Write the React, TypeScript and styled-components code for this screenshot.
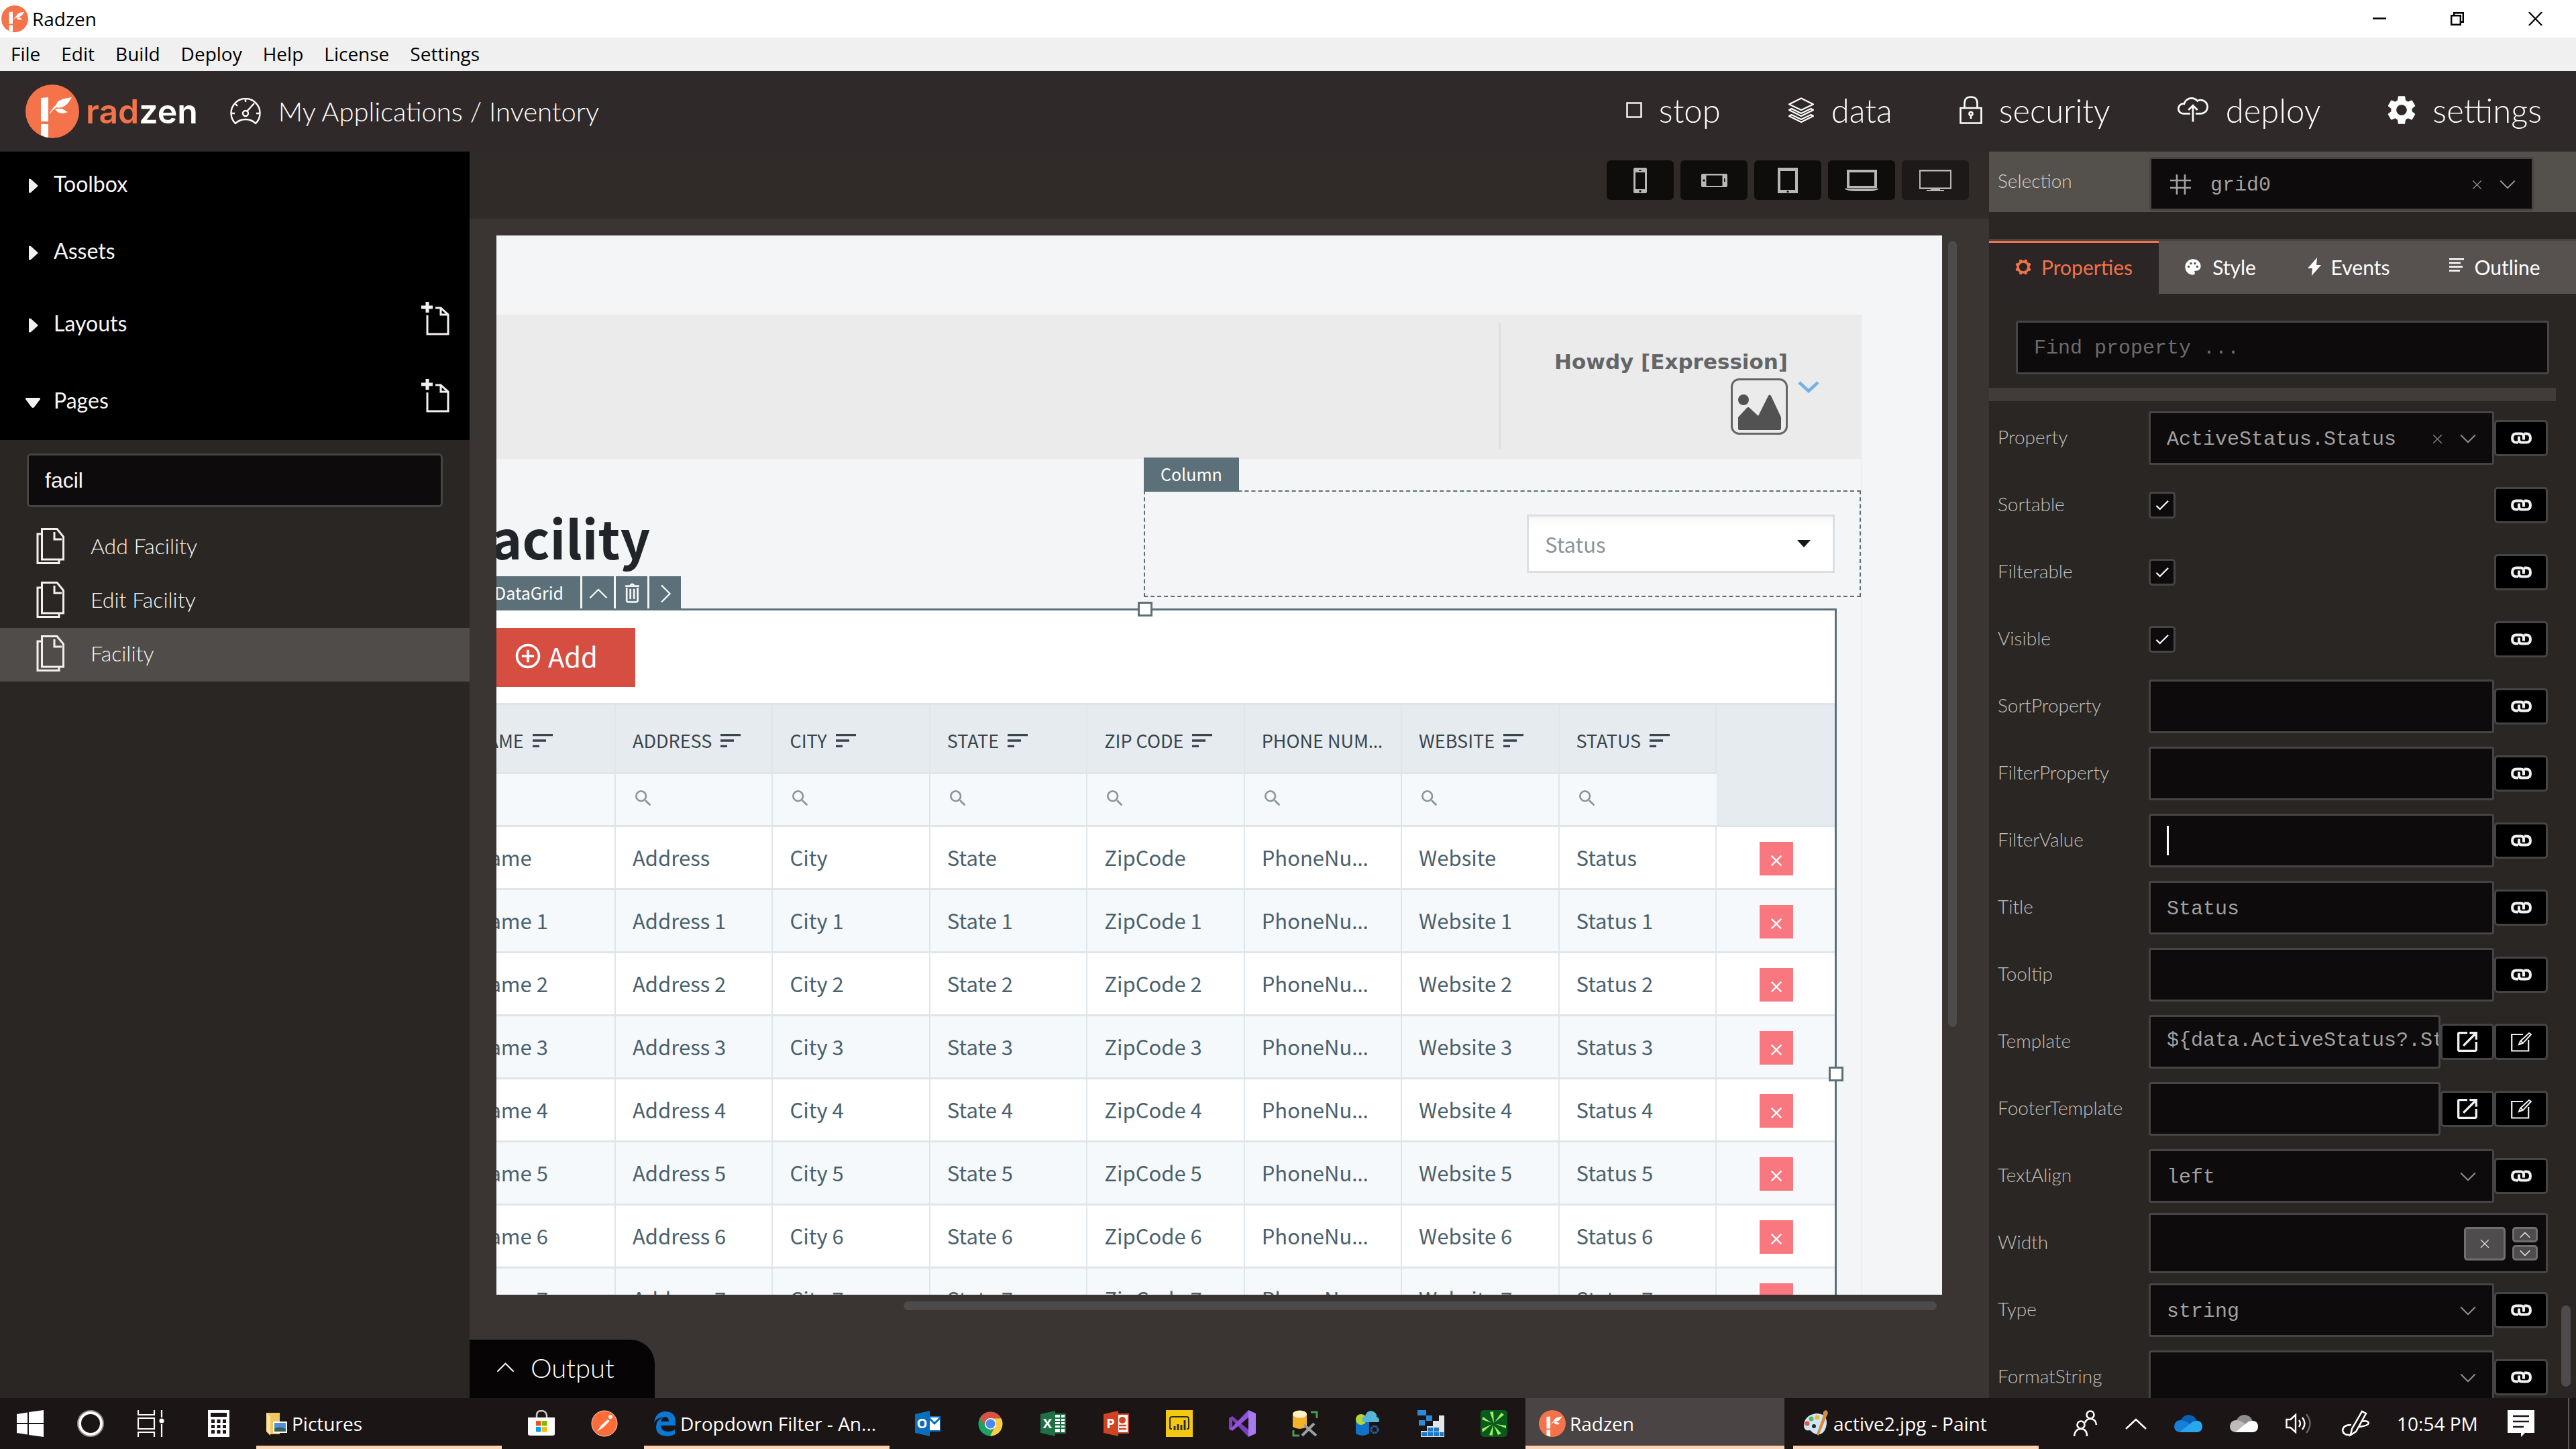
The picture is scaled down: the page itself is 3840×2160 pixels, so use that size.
import React from 'react';
import styled, { createGlobalStyle, css } from 'styled-components';
import { TfiCloudUp, TfiTrash, TfiAngleUp, TfiAngleRight, TfiAngleDown, TfiClose } from 'react-icons/tfi';
import {
  MdSettings, MdOpenInNew, MdSort, MdSearch, MdAddCircleOutline, MdPalette, MdCheck, MdClose,
} from 'react-icons/md';

const color = {
  orange: '#f4734a',
  header: '#2f2929',
  panel: '#2a2623',
  stage: '#3a3532',
  field: '#0d0b0c',
  line: '#464445',
  slate: '#5c7079',
  gridLine: '#dfe6ea',
};

const font = {
  ui: '"Open Sans", "Noto Sans", sans-serif',
  lato: 'Lato, "Open Sans", sans-serif',
  source: '"Noto Sans CJK SC", "Noto Sans", sans-serif',
  mono: '"Liberation Mono", "DejaVu Sans Mono", monospace',
};

const GlobalStyle = createGlobalStyle`
  *, *::before, *::after { box-sizing: border-box; }
  body { margin: 0; background: ${color.stage}; font-family: ${font.lato}; }
  button, input, select { font: inherit; color: inherit; margin: 0; border-radius: 0; }
  button { background: none; border: 0; padding: 0; }
  a { color: inherit; text-decoration: none; }
  h1, ul { margin: 0; padding: 0; }
  ul { list-style: none; }
  svg { display: block; flex: none; }
`;

const AppWindow = styled.div`
  display: flex;
  flex-direction: column;
  height: 100vh;
  overflow: hidden;
`;

/* ---------- window chrome ---------- */

const TitleBar = styled.div`
  display: flex;
  align-items: center;
  gap: 6px;
  height: 56px;
  padding: 0 50px 0 2px;
  background: #fff;
  color: #000;
  font: 28px/40px ${font.ui};
`;

const WindowControls = styled.div`
  display: flex;
  gap: 96px;
  margin-left: auto;
`;

const MenuBar = styled.nav`
  display: flex;
  align-items: center;
  gap: 31px;
  height: 50px;
  padding: 0 16px 2px;
  background: #f0f0f0;
  color: #000;
  font: 28px/40px ${font.ui};
`;

const Header = styled.header`
  display: flex;
  align-items: center;
  height: 120px;
  padding: 0 51px 0 38px;
  background: ${color.header};
  color: #fff;
`;

const Brand = styled.a`
  display: flex;
  align-items: center;
  gap: 10px;
  font: 600 50px/60px Inter, sans-serif;
  color: #fff;
  b { color: ${color.orange}; font-weight: 600; }
`;

const Crumbs = styled.div`
  display: flex;
  align-items: center;
  gap: 26px;
  margin-left: 48px;
  font: 300 40px/60px ${font.lato};
`;

const HeaderNav = styled.nav`
  display: flex;
  gap: 100px;
  margin-left: auto;
  padding-bottom: 4px;
  font: 300 49px/60px ${font.lato};
`;

const NavButton = styled.button`
  display: flex;
  align-items: center;
  gap: 25px;
`;

const IconBox = styled.span<{ $w: number }>`
  display: flex;
  justify-content: center;
  width: ${p => p.$w}px;
`;

/* ---------- workspace ---------- */

const Workspace = styled.div`
  display: flex;
  flex: 1;
  min-height: 0;
`;

const Sidebar = styled.aside`
  flex: none;
  width: 700px;
  background: ${color.panel};
  color: #f8f6f4;
`;

const SectionList = styled.div`
  background: #000;
`;

const Section = styled.div<{ $tall?: boolean }>`
  display: flex;
  align-items: center;
  justify-content: space-between;
  height: ${p => (p.$tall ? 115 : 100)}px;
  padding: 0 30px 4px 38px;
`;

const SectionToggle = styled.button`
  display: flex;
  align-items: center;
  gap: 20px;
  font: 32px/40px ${font.lato};
  svg { margin-top: 6px; }
`;

const AddPageButton = styled.button`
  margin-bottom: 14px;
`;

const PageFilter = styled.input`
  display: block;
  width: 620px;
  height: 80px;
  margin: 20px 40px;
  padding: 0 24px;
  background: ${color.field};
  border: 3px solid ${color.line};
  border-radius: 6px;
  outline: 0;
  font: 32px/40px "Liberation Sans", Arial, sans-serif;
`;

const PageLink = styled.a<{ $active?: boolean }>`
  display: flex;
  align-items: center;
  gap: 38px;
  height: 80px;
  padding: 0 0 4px 54px;
  background: ${p => (p.$active ? '#504c49' : 'transparent')};
  font: 300 32px/40px ${font.lato};
`;

const Stage = styled.main`
  display: flex;
  flex-direction: column;
  flex: 1;
  min-width: 0;
  background: ${color.stage};
`;

const DeviceBar = styled.div`
  display: flex;
  justify-content: flex-end;
  gap: 10px;
  height: 100px;
  padding: 13px 30px 0 0;
  background: #302a28;
`;

const DeviceButton = styled.button<{ $active?: boolean }>`
  display: flex;
  align-items: center;
  justify-content: center;
  width: 100px;
  height: 59px;
  border-radius: 6px;
  background: ${p => (p.$active ? '#1d1918' : '#0f0d0b')};
  color: #b9b7b4;
`;

const Viewport = styled.div`
  display: grid;
  grid-template: minmax(0, 1fr) 13px / minmax(0, 1fr) 13px;
  gap: 10px 9px;
  flex: 1;
  min-height: 0;
  padding: 25px 48px 44px 40px;
`;

const VTrack = styled.div`
  padding: 8px 0;
  &::before { content: ''; display: block; height: 75%; border-radius: 7px; background: #4c4a4a; }
`;

const HTrack = styled.div`
  display: flex;
  justify-content: flex-end;
  padding: 0 8px;
  &::before { content: ''; width: 72%; border-radius: 7px; background: #4c4a4a; }
`;

const OutputTab = styled.button`
  display: flex;
  align-items: center;
  align-self: flex-start;
  gap: 24px;
  height: 87px;
  padding: 0 60px 4px 40px;
  background: #060405;
  color: #fff;
  border-top-right-radius: 36px;
  font: 300 40px/60px ${font.lato};
  svg { stroke: currentColor; stroke-width: 0.4; }
`;

/* ---------- designed page ---------- */

const Canvas = styled.section`
  overflow: hidden;
  background: #f3f5f7;
  font-family: ${font.source};
`;

const DesignPage = styled.div`
  margin: 118px 119px 0 -64px;
  border-right: 2px solid #eceef0;
`;

const PageHeader = styled.div`
  display: flex;
  justify-content: flex-end;
  height: 215px;
  padding: 12px 0 14px;
  background: #ebebeb;
`;

const UserBox = styled.div`
  display: flex;
  justify-content: flex-end;
  gap: 15px;
  width: 540px;
  padding: 36px 62px 0 0;
  border-left: 3px solid #dfdfdf;
`;

const UserInfo = styled.div`
  display: flex;
  flex-direction: column;
  align-items: flex-end;
  gap: 5px;
  padding-top: 2px;
  color: #636567;
  font: bold 31px/40px "DejaVu Sans", "Noto Sans", sans-serif;
`;

const UserToggle = styled.button`
  display: flex;
  align-self: flex-start;
  margin-top: 51px;
`;

const TitleRow = styled.div`
  display: grid;
  grid-template-columns: 1029px 1fr;
  height: 223px;
  padding: 47px 0 17px;
`;

const PageTitle = styled.h1`
  padding: 11px 0 0 14px;
  color: #212429;
  font: bold 78px/116px ${font.source};
`;

const ColumnBox = styled.div`
  position: relative;
  display: flex;
  justify-content: flex-end;
  align-items: center;
  padding-right: 37px;
  border: 2px dashed ${color.slate};
`;

const TagBar = styled.div`
  position: absolute;
  bottom: 100%;
  left: -2px;
  display: flex;
  gap: 3px;
`;

const Tag = styled.span<{ $inset?: boolean }>`
  height: 51px;
  padding: 0 25px 0 ${p => (p.$inset ? 63 : 25)}px;
  background: ${color.slate};
  color: #fff;
  font: 25px/48px ${font.source};
`;

const TagButton = styled.button`
  display: flex;
  align-items: center;
  justify-content: center;
  width: 47px;
  height: 51px;
  background: ${color.slate};
  color: #fff;
  svg { stroke: currentColor; stroke-width: 0.4; }
`;

const StatusPicker = styled.div`
  display: grid;
  align-items: center;
  width: 459px;
  height: 87px;
  background: linear-gradient(#f6f6f6, #fff 14px);
  border: 3px solid #dadfe2;
  > * { grid-area: 1 / 1; }
  > svg { justify-self: end; margin-right: 33px; }
  select {
    appearance: none;
    height: 100%;
    padding: 0 24px;
    background: none;
    border: 0;
    color: #8a9499;
    font: 31px/40px ${font.source};
  }
`;

const GridFrame = styled.div`
  position: relative;
  width: 2062px;
  background: #fff;
  border: solid ${color.slate};
  border-width: 3px 3px 0 0;
`;

const Handle = styled.span<{ $side: 'top' | 'right' }>`
  position: absolute;
  width: 22px;
  height: 22px;
  background: #fff;
  border: 3px solid ${color.slate};
  ${p => (p.$side === 'top'
    ? css`top: -13px; left: calc(50% - 10px);`
    : css`top: 680px; right: -13px;`)}
`;

const GridToolbar = styled.div`
  padding: 26px 36px 24px;
`;

const AddButton = styled.button`
  display: flex;
  align-items: center;
  gap: 8px;
  height: 88px;
  padding: 0 56px 4px 53px;
  background: #d64d41;
  color: #fff;
  font: 40px/60px ${font.source};
`;

const Table = styled.table`
  width: 100%;
  table-layout: fixed;
  border-collapse: separate;
  border-spacing: 0;
  color: #4a616d;
  font: 31px/40px ${font.source};
  th, td {
    padding: 0 23px 0 25px;
    text-align: left;
    border-right: 2px solid ${color.gridLine};
    border-bottom: 3px solid ${color.gridLine};
  }
  th:first-child, td:first-child { padding-left: 31px; }
  th:last-child, td:last-child { border-right: 0; }
  tbody tr { height: 94px; }
  tbody tr:nth-child(even) { background: #f6f9fb; }
`;

const TitleCells = styled.tr`
  height: 106px;
  background: #e6ebef;
  color: #38454b;
  th { font-weight: 400; font-size: 27px; border-top: 3px solid ${color.gridLine}; padding-top: 6px; }
`;

const FilterCells = styled.tr`
  height: 79px;
  background: #f6f9fb;
  color: #86969a;
  td { padding-bottom: 4px; }
`;

const Col = styled.col<{ $w: number }>`
  width: ${p => p.$w}px;
`;

const Clip = styled.div`
  display: block;
  overflow: hidden;
  white-space: nowrap;
  text-overflow: ellipsis;
  font-family: "Noto Sans", sans-serif;
  svg { display: inline-block; vertical-align: -9px; margin-left: 8px; }
`;

const ClipText = styled.span`
  font-family: ${font.source};
`;

const RemoveButton = styled.button`
  display: flex;
  align-items: center;
  justify-content: center;
  width: 50px;
  height: 50px;
  margin: 2px auto 0;
  padding-top: 6px;
  background: #f9777f;
  color: #fff;
`;

/* ---------- inspector ---------- */

const Inspector = styled.aside`
  display: flex;
  flex-direction: column;
  flex: none;
  width: 875px;
  background: ${color.panel};
  color: #c4c0bd;
`;

const SelectionBar = styled.div`
  display: grid;
  grid-template-columns: 226px 573px;
  align-items: center;
  flex: none;
  height: 90px;
  padding-left: 13px;
  background: #54504c;
  font: 300 28px/40px ${font.lato};
  > label { padding-bottom: 4px; color: #d6d3d0; }
  > div { margin-top: 6px; }
`;

const TabList = styled.div`
  display: flex;
  flex: none;
  margin-top: 40px;
  border-top: 3px solid ${color.line};
  height: 82px;
  background: #575250;
  color: #fff;
`;

const Tab = styled.button<{ $active?: boolean; $w: number }>`
  display: flex;
  align-items: center;
  justify-content: center;
  gap: 15px;
  width: ${p => p.$w}px;
  padding-bottom: 2px;
  font: 30px/40px ${font.lato};
  ${p => p.$active && css`
    background: #2b2525;
    color: ${color.orange};
    box-shadow: inset 0 3px ${color.orange};
  `}
`;

const fieldBox = css`
  background: ${color.field};
  border: 3px solid ${color.line};
  border-radius: 4px;
  font: 30px/40px ${font.mono};
  color: #a3a1a0;
`;

const PropertySearch = styled.input`
  ${fieldBox}
  flex: none;
  height: 80px;
  margin: 40px 40px 20px;
  padding: 2px 24px 0;
  outline: 0;
  &::placeholder { color: #6e6c6b; opacity: 1; }
`;

const Divider = styled.div`
  flex: none;
  height: 20px;
  margin-right: 30px;
  background: #413c39;
`;

const PropertyArea = styled.div`
  display: flex;
  flex: 1;
  min-height: 0;
  overflow: hidden;
`;

const PropertyList = styled.div`
  flex: 1;
  padding: 5px 20px 0 13px;
`;

const PropertyTrack = styled.div`
  display: flex;
  flex-direction: column;
  justify-content: flex-end;
  width: 22px;
  padding: 0 8px 17px 0;
  &::before { content: ''; height: 121px; border-radius: 7px; background: #4d4b4c; }
`;

const PropertyRow = styled.div`
  display: grid;
  grid-template-columns: 225px minmax(0, 1fr);
  align-items: center;
  height: 100px;
  > label { padding-bottom: 4px; font: 300 28px/40px ${font.lato}; }
`;

const Controls = styled.div`
  display: flex;
  align-items: center;
  justify-content: space-between;
`;

const Field = styled.div<{ $tall?: boolean; $raised?: boolean }>`
  ${fieldBox}
  display: grid;
  grid-template-columns: minmax(0, 1fr);
  align-items: center;
  flex: 1;
  min-width: 0;
  height: ${p => (p.$tall ? 90 : 80)}px;
  > * { grid-area: 1 / 1; }
  input, select {
    appearance: none;
    width: 100%;
    height: 100%;
    padding: ${p => (p.$raised ? '0 0 4px 24px' : '3px 0 0 24px')};
    background: none;
    border: 0;
    outline: 0;
  }
`;

const SelectionSelect = styled.select`
  && { padding-left: 88px; }
`;

const FieldTail = styled.span<{ $lead?: boolean }>`
  display: flex;
  align-items: center;
  justify-self: ${p => (p.$lead ? 'start' : 'end')};
  gap: 26px;
  padding: 2px 24px 0;
  pointer-events: ${p => (p.$lead ? 'none' : 'auto')};
  > svg { stroke: currentColor; stroke-width: 0.4; }
`;

const HashMark = styled(FieldTail)`
  padding-left: 28px;
  > svg { stroke-width: 2.6; }
`;

const Caret = styled.span`
  width: 3px;
  height: 44px;
  margin-left: 24px;
  background: #fff;
`;

const SquareButton = styled.button`
  display: flex;
  align-items: center;
  justify-content: center;
  flex: none;
  width: 80px;
  height: 54px;
  background: #000;
  border: 3px solid ${color.line};
  border-radius: 5px;
  color: #f1f1f1;
`;

const Tick = styled.span`
  display: grid;
  place-items: center;
  width: 40px;
  height: 40px;
  background: ${color.field};
  border: 3px solid ${color.line};
  border-radius: 5px;
  color: #fff;
  > * { grid-area: 1 / 1; }
  input { appearance: none; width: 100%; height: 100%; }
`;

const SmallKey = styled.button<{ $w: number; $h: number }>`
  display: flex;
  align-items: center;
  justify-content: center;
  width: ${p => p.$w}px;
  height: ${p => p.$h}px;
  background: #4e4c4d;
  border: 3px solid #716f6f;
  border-radius: 5px;
  color: #fff;
  svg { stroke: currentColor; stroke-width: 0.5; }
`;

const Stepper = styled.span`
  display: flex;
  flex-direction: column;
  gap: 4px;
  margin-left: -16px;
  margin-right: -12px;
`;

/* ---------- taskbar ---------- */

const TaskbarRoot = styled.footer`
  display: flex;
  flex: none;
  height: 76px;
  background: #1c1515;
  color: #fff;
  font: 28px/40px ${font.ui};
`;

const TaskIcon = styled.button<{ $w: number }>`
  display: flex;
  align-items: center;
  justify-content: center;
  width: ${p => p.$w}px;
`;

const TaskGroup = styled.div<{ $grow?: boolean }>`
  display: flex;
  flex: ${p => (p.$grow ? '1' : 'none')};
  margin: ${p => (p.$grow ? '0 0 0 10px' : '0 12px')};
  > * { flex: ${p => (p.$grow ? '1' : 'none')}; }
`;

const TaskWindow = styled.button<{ $active?: boolean }>`
  display: flex;
  align-items: center;
  flex: none;
  gap: 6px;
  width: ${p => (p.$active ? 386 : 366)}px;
  padding: ${p => (p.$active ? '0 20px' : '0 14px')};
  margin-right: ${p => (p.$active ? 13 : 0)}px;
  white-space: nowrap;
  background: ${p => (p.$active ? '#4b4444' : 'transparent')};
  box-shadow: inset 0 -5px #fdd2b3;
`;

const Tray = styled.div`
  display: flex;
  align-items: center;
  gap: 41px;
  margin: 0 10px 0 52px;
  padding-right: 50px;
  border-right: 2px solid #5c5656;
  > time { width: 124px; white-space: nowrap; }
`;

/* ---------- drawings ---------- */

const Logo = ({ size }: { size: number }) => (
  <svg width={size} height={size} viewBox="0 0 80 80">
    <circle cx="40" cy="40" r="40" fill="#f4734a" />
    <path d="M23 20l11-1v36H23zM23 59h11v20q-6-1-11-4z" fill="#fff" />
    <path d="M35 45Q39 36 45 31Q48 23 58 21Q64 20 69 19Q66 25 61 30Q54 36 46 34Q39 39 35 45z" fill="#fff" />
    <path d="M44 37Q52 34 58 38Q61 41 63 41Q54 45 48 41z" fill="#fff" />
  </svg>
);

const Minimise = () => <svg width="20" height="20" viewBox="0 0 20 20"><path d="M0 9.5h20" stroke="#000" strokeWidth="2.5" /></svg>;
const Restore = () => (
  <svg width="20" height="20" viewBox="0 0 20 20" fill="none" stroke="#000" strokeWidth="2.4">
    <path d="M1.2 5.2h13.6v13.6H1.2zM5.2 5V1.2h13.6v13.6H15" />
  </svg>
);
const CloseWin = () => <svg width="21" height="20" viewBox="0 0 21 20"><path d="M.8 0l19.4 20M20.2 0L.8 20" stroke="#000" strokeWidth="2.2" /></svg>;

const Triangle = ({ open }: { open?: boolean }) => (
  <svg width="22" height="22" viewBox="0 0 22 22" fill="#f1f1f1">
    {open ? <path d="M1 4h20q2 1 1 2l-9 12q-2 2-4 0L0 6q-1-1 1-2z" /> : <path d="M5 1q1-1 3 0l10 9q1 1 0 2L8 21q-2 1-3 0z" />}
  </svg>
);

const NewPage = () => (
  <svg width="42" height="50" viewBox="0 0 42 50" fill="none" stroke="#f3f0ee" strokeWidth="3">
    <path d="M9 0v16M0 8h17" strokeWidth="5" />
    <path d="M9 20v28h31V19L29 9h-8M29 9v10h11" />
  </svg>
);

const Pages = () => (
  <svg width="43" height="54" viewBox="0 0 43 54" fill="none" stroke="#f3f0ee" strokeWidth="3">
    <path d="M8.500 1.500H31L40.500 13v34h-32zM27 6v11h11" />
    <path d="M8 9H2v43.500h32V47" />
  </svg>
);

const Gauge = () => (
  <svg width="46" height="40" viewBox="0 0 46 40" fill="none" stroke="currentColor" strokeWidth="2.400">
    <path d="M8 38Q1.500 32 1.500 22.500A21.500 21.500 0 0 1 44.500 22.500Q44.500 32 38 38Q32 32 23 32T8 38z" strokeLinejoin="round" />
    <circle cx="23" cy="23" r="4" />
    <path d="M25 20L36 8M23 1v5M2 23h5M39 23h5M8 9l3 3" />
  </svg>
);

const Layers = () => (
  <svg width="40" height="39" viewBox="0 0 40 39" fill="none" stroke="currentColor" strokeWidth="2.200" strokeLinejoin="round">
    <path d="M20 1.500L38 10.500 20 19 2 10.500z" />
    <path d="M5.500 17L2 19l18 9 18-9-3.500-2L20 24z" />
    <path d="M5.500 26L2 28l18 9 18-9-3.500-2L20 33z" />
  </svg>
);

const Padlock = () => (
  <svg width="34" height="42" viewBox="0 0 34 42" fill="none" stroke="currentColor" strokeWidth="2.600">
    <path d="M1.500 18h31v22.500h-31zM7.500 18V11q0-9.500 9.500-9.500T26.500 11v7" />
    <path d="M17 29v5" />
    <circle cx="17" cy="26.500" r="2.500" />
  </svg>
);

const StopMark = () => <svg width="24" height="24" viewBox="0 0 24 24"><path d="M1.500 1.500h21v21h-21z" fill="none" stroke="#f1eeee" strokeWidth="2.600" /></svg>;

const Phone = () => (
  <svg width="20" height="38" viewBox="0 0 20 38"><path fillRule="evenodd" fill="currentColor" d="M2 0h16q2 0 2 2v34q0 2-2 2H2q-2 0-2-2V2q0-2 2-2zM3 7v25h14V7zM8.500 33.500v3h3v-3zM8 3.500v1.500h4V3.500z" /></svg>
);
const PhoneWide = () => (
  <svg width="39" height="20" viewBox="0 0 39 20"><path fillRule="evenodd" fill="currentColor" d="M2 0h35q2 0 2 2v16q0 2-2 2H2q-2 0-2-2V2q0-2 2-2zM7.500 2.500v15.500h24V2.500zM2.500 8.500v3h3v-3zM34 7v5h1.500V7z" /></svg>
);
const Tablet = () => (
  <svg width="30" height="38" viewBox="0 0 30 38"><path fillRule="evenodd" fill="currentColor" d="M0 0h30v38H0zM4 5v28h22V5zM13.500 34.500v2.500h3v-2.500z" /></svg>
);
const Laptop = () => (
  <svg width="50" height="32" viewBox="0 0 50 32"><path fillRule="evenodd" fill="currentColor" d="M3 0h45v27H3zM7 4v20h37V4zM0 28h50v1q-6 3-13 3H13Q6 32 0 29z" /></svg>
);
const Desktop = () => (
  <svg width="48" height="32" viewBox="0 0 48 32"><path fillRule="evenodd" fill="currentColor" d="M0 0h48v29H31v1h6v2H11v-2h6v-1H0zM2 2.500v24h44v-24z" /></svg>
);

const Cog = () => (
  <svg width="24" height="24" viewBox="0 0 24 24" fill="currentColor">
    <circle cx="12" cy="12" r="8" fill="none" stroke="currentColor" strokeWidth="3.600" />
    {[22.5, 67.5, 112.5, 157.5, 202.5, 247.5, 292.5, 337.5].map(a => (
      <rect key={a} x="10" y="0.300" width="4" height="5" rx="1" transform={`rotate(${a} 12 12)`} />
    ))}
  </svg>
);
const Bolt = () => <svg width="20" height="27" viewBox="0 0 20 27" fill="currentColor"><path d="M14 0L0 16h7L6 27L20 11h-7z" /></svg>;
const Lines = () => <svg width="22" height="26" viewBox="0 0 22 26" stroke="currentColor" strokeWidth="2.500"><path d="M0 1.300h22M0 7h17M0 12.700h20M0 18.500h16" /></svg>;
const Hash = () => <svg width="31" height="30" viewBox="0 0 31 30" stroke="#f1f1f1" strokeWidth="2.600"><path d="M10 0v30M22 0v30M0 9h31M0 20h31" /></svg>;

const Link = () => (
  <svg width="31" height="18" viewBox="0 0 31 18" fill="none" stroke="currentColor" strokeWidth="4">
    <path d="M11 15.500H8Q2 15.500 2 9T8 2.500h7q4 0 4 4v5" />
    <path d="M20 2.500h3q6 0 6 6.500t-6 6.500h-7q-4 0-4-4v-5" />
  </svg>
);

const EditBox = () => (
  <svg width="31" height="30" viewBox="0 0 31 30" fill="none" stroke="currentColor" strokeWidth="2.200">
    <path d="M18 4H1.200v24.500h25V12" />
    <path d="M12 19l2-5L27 2l3 2-12 13zM15 14l3 3" strokeWidth="2" />
  </svg>
);

const ImageMark = () => (
  <svg width="85" height="84" viewBox="0 0 85 84">
    <rect x="1.500" y="1.500" width="82" height="81" rx="11" fill="none" stroke="#636567" strokeWidth="3" />
    <circle cx="19" cy="32" r="8" fill="#525252" />
    <path d="M11 75V58L24 44Q26 42 28 44L41 56L56 26Q58 23 60 26L75 58V75q0 2-2 2H13q-2 0-2-2z" fill="#525252" />
  </svg>
);

const ChevronBlue = () => <svg width="32" height="18" viewBox="0 0 32 18"><path d="M2 2l14 13L30 2" fill="none" stroke="#74b0e8" strokeWidth="4.500" /></svg>;
const DownMark = () => <svg width="20" height="11" viewBox="0 0 20 11"><path d="M0 0h20L10 11z" fill="#15181b" /></svg>;

const Office = ({ fill, side, children }: { fill: string; side: React.ReactNode; children: string }) => (
  <svg width="38" height="38" viewBox="0 0 38 38">
    {side}
    <path d="M0 5L22 0v38L0 33z" fill={fill} />
    <text x="10.500" y="26" fontSize="20" fontWeight="700" fontFamily="Open Sans" fill="#fff" textAnchor="middle">{children}</text>
  </svg>
);

const icons = {
  start: <svg width="40" height="40" viewBox="0 0 40 40" fill="#fff"><path d="M0 6l16-2.500v15.500H0zM18 3l22-3v19H18zM0 21h16v15.500L0 34zM18 21h22v19l-22-3z" /></svg>,
  cortana: <svg width="40" height="40" viewBox="0 0 40 40" fill="none"><circle cx="20" cy="20" r="18" stroke="#8b8888" strokeWidth="4" /><circle cx="20" cy="20" r="16" stroke="#fff" strokeWidth="4" /></svg>,
  taskView: <svg width="40" height="40" viewBox="0 0 40 40" fill="none" stroke="#fff" strokeWidth="2.200"><path d="M1 0v7h24V0M1 12h24v16H1zM1 40v-7h24v7M36 0v11M36 21v19" /><circle cx="36" cy="16" r="2.500" fill="#fff" /></svg>,
  calc: <svg width="32" height="40" viewBox="0 0 32 40"><path d="M0 0h32v40H0z" fill="#fff" /><path d="M4 4h24v6H4zM5 14h5v5H5zM13.500 14h5v5h-5zM22 14h5v5h-5zM5 22h5v5H5zM13.500 22h5v5h-5zM22 22h5v5h-5zM5 30h5v5H5zM13.500 30h5v5h-5zM22 30h5v5h-5z" fill="#1c1515" /></svg>,
  folder: <svg width="33" height="36" viewBox="0 0 33 36"><path d="M1 2h20v32H7L1 28z" fill="#f2c661" /><path d="M1 2l6 5v29l-6-6z" fill="#ffe29a" /><path d="M11 15h21v17H11z" fill="#fff" /><path d="M13 17h17v13H13z" fill="#4f8fdc" /><path d="M13 26q6-5 17 0v4H13z" fill="#355f58" /></svg>,
  store: <svg width="40" height="40" viewBox="0 0 40 40"><path d="M13 11V8q0-7 7-7t8 7v3" fill="none" stroke="#c9c9c9" strokeWidth="2.500" /><path d="M0 11h40v24q0 3-3 3H3q-3 0-3-3z" fill="#fff" /><path d="M12 16h7.500v7.500H12z" fill="#f25022" /><path d="M21 16h7.500v7.500H21z" fill="#7fba00" /><path d="M12 25h7.500v7.500H12z" fill="#00a4ef" /><path d="M21 25h7.500v7.500H21z" fill="#ffb900" /></svg>,
  postman: <svg width="40" height="40" viewBox="0 0 40 40"><circle cx="20" cy="20" r="19" fill="#ff6c37" stroke="#ffd9c7" /><path d="M9 32l6-9 10-9 3 2-10 10z" fill="#fff" /><circle cx="29" cy="10" r="3" fill="#fff" /></svg>,
  edge: <svg width="34" height="37" viewBox="0 0 34 37"><path d="M1 17Q3 1 17 0q16 0 16 16v5H11q1 9 11 9 6 0 10-3v7q-5 3-12 3Q4 36 4 23 4 13 14 9 5 9 1 17zm10-2h12q0-7-6-7-5 1-6 7z" fill="#0a78d6" /></svg>,
  outlook: <Office fill="#0a6ebd" side={<><path d="M20 9h18v21H20z" fill="#fff" stroke="#0a6ebd" strokeWidth="2" /><path d="M20 10l9 9 9-9" fill="none" stroke="#0a6ebd" strokeWidth="3" /></>}>O</Office>,
  chrome: <svg width="37" height="37" viewBox="0 0 37 37"><circle cx="18.500" cy="18.500" r="18" fill="#1da462" /><path d="M3 9.500A18 18 0 0 1 34.500 10.500H18.500L11 22z" fill="#dd4f40" /><path d="M34.500 10.500A18 18 0 0 1 18 36.500L26 21 18.500 10.500z" fill="#ffcd42" /><circle cx="18.500" cy="18.500" r="8.500" fill="#fff" /><circle cx="18.500" cy="18.500" r="7" fill="#4c8bf5" /></svg>,
  excel: <Office fill="#1f7145" side={<><path d="M20 5h17v28H20z" fill="#fff" stroke="#1f7145" strokeWidth="2" /><path d="M22 11h14M22 16h14M22 21h14M22 26h14M30 6v26" stroke="#1f7145" strokeWidth="2" /></>}>X</Office>,
  ppt: <Office fill="#d04424" side={<><path d="M20 5h17v28H20z" fill="#fff" stroke="#d04424" strokeWidth="2" /><path d="M23 22h11M23 27h11" stroke="#d04424" strokeWidth="2.500" /><circle cx="28" cy="14" r="5" fill="#d04424" /></>}>P</Office>,
  powerBi: <svg width="40" height="40" viewBox="0 0 40 40"><path d="M0 0h40v40H0z" fill="#f2c811" /><path d="M9 28H7q-1 0-1-2V13q0-3 3-3h22q3 0 3 3v13q0 2-1 2h-2" fill="none" stroke="#2b2a1e" strokeWidth="2" /><path d="M13 30v-6M18 30v-9M23 30v-8M28 30V15" stroke="#2b2a1e" strokeWidth="2.800" /></svg>,
  vs: <svg width="40" height="40" viewBox="0 0 40 40"><path d="M29 0l11 5v30l-11 5z" fill="#a77bf0" /><path d="M0 12l5-3 24 20V40L5 15v12l-5 2z" fill="#7a3fbd" /><path d="M0 28l5 3L29 11V0L5 25z" fill="#9352dd" /></svg>,
  ssms: <svg width="40" height="40" viewBox="0 0 40 40"><path d="M1 5v20q10 6 21 0V5z" fill="#f2b32c" /><ellipse cx="11.500" cy="6" rx="10.500" ry="5.500" fill="#fdf0c9" /><path d="M28 3h9v9M2 30v8h9" fill="none" stroke="#4c9a55" strokeWidth="3" /><path d="M15 38l18-18M18 22l18 16" stroke="#9a9fa3" strokeWidth="4" /></svg>,
  azure: <svg width="38" height="38" viewBox="0 0 38 38"><path d="M1 13v21q9 6 20 0V13z" fill="#1173c7" /><circle cx="9" cy="13" r="8" fill="#b8d432" /><path d="M12 17q-4-7 3-9 3-10 12-7 6 3 5 8 6 3 3 8z" fill="#59b4d9" /><circle cx="29" cy="28" r="5" fill="none" stroke="#2563a8" strokeWidth="3" strokeDasharray="3 1" /></svg>,
  cubes: <svg width="40" height="40" viewBox="0 0 40 40"><path d="M0 0h13v8H0zM13 8h9v8h-9zM2 15h9v8H2z" fill="#2c8ad8" /><path d="M5 31h9v-7h9v-8h9V8h8v32H5z" fill="#e4e7ea" /><path d="M6 33h8v6H6zM15 33h8v6h-8zM24 33h8v6h-8zM33 33h6v6h-6zM15 26h8v6h-8zM24 26h8v6h-8z" fill="#2079c4" /></svg>,
  green: <svg width="40" height="40" viewBox="0 0 40 40"><rect width="40" height="40" rx="5" fill="#0b5a1d" /><path d="M20 20L14 3l5-1zM21 18L31 4l4 3zM23 21l15 2v4zM20 23l11 12-5 2zM19 22l-1 16-5-1zM17 21L3 33l-1-5zM16 19L2 14l2-4z" fill="#9df05a" /></svg>,
  paint: <svg width="40" height="40" viewBox="0 0 40 40"><path d="M20 5q17 0 16 15-2 18-16 16-5-2-9-6-8 2-9-6Q2 8 20 5z" fill="#cfe6f3" /><circle cx="7" cy="20" r="3.500" fill="#e2554a" /><circle cx="13" cy="13" r="3.500" fill="#57b858" /><circle cx="22" cy="11" r="3.500" fill="#f0b73c" /><circle cx="17" cy="24" r="3" fill="#20303a" /><path d="M35 0q5 3 1 9L24 38l-3-2L31 8q-2-6 4-8z" fill="#d98a3d" /></svg>,
  people: <svg width="36" height="40" viewBox="0 0 36 40" fill="none" stroke="#fff" strokeWidth="2.600"><circle cx="25" cy="7" r="5.500" /><path d="M17 19q2-6 8-6 8 0 9 9" /><circle cx="11" cy="22" r="5.500" /><path d="M1 39q1-11 10-11t9 11" /></svg>,
  up: <svg width="32" height="17" viewBox="0 0 32 17"><path d="M1 16L16 2l15 14" fill="none" stroke="#fff" strokeWidth="2.400" /></svg>,
  volume: <svg width="42" height="38" viewBox="0 0 42 38" fill="none" stroke="#fff" strokeWidth="2.400"><path d="M1.500 13h6L15 6v26l-7.500-7h-6zM20 14q4 5 0 10M25 10q7 9 0 18" /><path d="M31 5q11 14 0 28" stroke="#6d6767" /></svg>,
  pen: <svg width="42" height="40" viewBox="0 0 42 40" fill="none" stroke="#fff" strokeWidth="2.500"><path d="M14 37l2-9L31 2l6 3-15 27zM15 22q-12 0-13 8 1 8 12 7M30 17q9-2 11 2 0 4-14 6" /></svg>,
  notes: <svg width="40" height="40" viewBox="0 0 40 40"><path d="M0 0h40v34H26l-6 6v-6H0z" fill="#fff" /><path d="M8 9h24M8 17h24M8 25h16" stroke="#1c1515" strokeWidth="2.500" /></svg>,
};

const Cloud = ({ shades }: { shades: [string, string, string] }) => (
  <svg width="42" height="26" viewBox="0 0 42 26">
    <path d="M10 8Q14 0 22 0q9 1 12 9l-12 8z" fill={shades[0]} />
    <path d="M8 26Q0 25 0 17 1 8 10 8q5 0 9 3l14 8z" fill={shades[1]} />
    <path d="M8 26l20-16q13-4 14 7 0 8-7 9z" fill={shades[2]} />
  </svg>
);

/* ---------- data ---------- */

const columns = [
  { title: 'NAME', cell: 'Name' },
  { title: 'ADDRESS', cell: 'Address' },
  { title: 'CITY', cell: 'City' },
  { title: 'STATE', cell: 'State' },
  { title: 'ZIP CODE', cell: 'ZipCode' },
  { title: 'PHONE NUMBER', cell: 'PhoneNumber' },
  { title: 'WEBSITE', cell: 'Website' },
  { title: 'STATUS', cell: 'Status' },
];

type Prop = {
  name: string;
  kind: 'text' | 'select' | 'check' | 'template' | 'number';
  value?: string;
  clearable?: boolean;
  caret?: boolean;
};

const properties: Prop[] = [
  { name: 'Property', kind: 'select', value: 'ActiveStatus.Status', clearable: true },
  { name: 'Sortable', kind: 'check' },
  { name: 'Filterable', kind: 'check' },
  { name: 'Visible', kind: 'check' },
  { name: 'SortProperty', kind: 'text' },
  { name: 'FilterProperty', kind: 'text' },
  { name: 'FilterValue', kind: 'text', caret: true },
  { name: 'Title', kind: 'text', value: 'Status' },
  { name: 'Tooltip', kind: 'text' },
  { name: 'Template', kind: 'template', value: '${data.ActiveStatus?.Status}' },
  { name: 'FooterTemplate', kind: 'template' },
  { name: 'TextAlign', kind: 'select', value: 'left' },
  { name: 'Width', kind: 'number' },
  { name: 'Type', kind: 'select', value: 'string' },
  { name: 'FormatString', kind: 'select', value: '' },
];

const PropertyEditor = ({ prop }: { prop: Prop }) => {
  const id = `prop-${prop.name}`;
  return (
    <PropertyRow>
      <label htmlFor={id}>{prop.name}</label>
      <Controls>
        {prop.kind === 'check' && (
          <Tick><input id={id} type="checkbox" defaultChecked /><MdCheck size={26} pointerEvents="none" /></Tick>
        )}
        {prop.kind === 'select' && (
          <Field>
            <select id={id} defaultValue={prop.value}><option>{prop.value}</option></select>
            <FieldTail>
              {prop.clearable && <TfiClose size={15} />}
              <TfiAngleDown size={24} />
            </FieldTail>
          </Field>
        )}
        {(prop.kind === 'text' || prop.kind === 'template') && (
          <Field $raised={prop.kind === 'template'}>
            <input id={id} type="text" defaultValue={prop.value} />
            {prop.caret && <Caret />}
          </Field>
        )}
        {prop.kind === 'number' && (
          <Field $tall>
            <input id={id} type="text" />
            <FieldTail>
              <SmallKey $w={62} $h={50} aria-label="Clear"><TfiClose size={14} /></SmallKey>
              <Stepper>
                <SmallKey $w={38} $h={23} aria-label="Increase"><TfiAngleUp size={16} /></SmallKey>
                <SmallKey $w={38} $h={23} aria-label="Decrease"><TfiAngleDown size={16} /></SmallKey>
              </Stepper>
            </FieldTail>
          </Field>
        )}
        {prop.kind === 'template' && (
          <>
            <SquareButton aria-label="Open editor"><MdOpenInNew size={40} /></SquareButton>
            <SquareButton aria-label="Edit"><EditBox /></SquareButton>
          </>
        )}
        {prop.kind !== 'template' && prop.kind !== 'number' && (
          <SquareButton aria-label="Bind"><Link /></SquareButton>
        )}
      </Controls>
    </PropertyRow>
  );
};

const FacilityGrid = () => (
  <GridFrame>
    <TagBar>
      <Tag $inset>DataGrid</Tag>
      <TagButton aria-label="Select parent"><TfiAngleUp size={28} /></TagButton>
      <TagButton aria-label="Delete"><TfiTrash size={31} /></TagButton>
      <TagButton aria-label="More"><TfiAngleRight size={28} /></TagButton>
    </TagBar>
    <Handle $side="top" />
    <Handle $side="right" />
    <GridToolbar>
      <AddButton><MdAddCircleOutline size={44} />Add</AddButton>
    </GridToolbar>
    <Table>
      <colgroup>
        <Col $w={242} />
        {columns.slice(1).map(c => <col key={c.title} />)}
        <Col $w={176} />
      </colgroup>
      <thead>
        <TitleCells>
          {columns.map(c => (
            <th key={c.title}><Clip><ClipText>{c.title}</ClipText><MdSort size={40} /></Clip></th>
          ))}
          <th rowSpan={2} />
        </TitleCells>
        <FilterCells>
          {columns.map(c => <td key={c.title}><MdSearch size={32} /></td>)}
        </FilterCells>
      </thead>
      <tbody>
        {Array.from({ length: 8 }, (_, i) => (
          <tr key={i}>
            {columns.map(c => (
              <td key={c.title}><Clip><ClipText>{i ? `${c.cell} ${i}` : c.cell}</ClipText></Clip></td>
            ))}
            <td><RemoveButton aria-label="Remove"><MdClose size={28} /></RemoveButton></td>
          </tr>
        ))}
      </tbody>
    </Table>
  </GridFrame>
);

const Taskbar = () => (
  <TaskbarRoot>
    <TaskIcon $w={90}>{icons.start}</TaskIcon>
    <TaskIcon $w={90}>{icons.cortana}</TaskIcon>
    <TaskIcon $w={90}>{icons.taskView}</TaskIcon>
    <TaskGroup><TaskIcon $w={88}>{icons.calc}</TaskIcon></TaskGroup>
    <TaskWindow>{icons.folder}Pictures</TaskWindow>
    <TaskGroup>
      <TaskIcon $w={94}>{icons.store}</TaskIcon>
      <TaskIcon $w={94}>{icons.postman}</TaskIcon>
    </TaskGroup>
    <TaskWindow>{icons.edge}Dropdown Filter - An...</TaskWindow>
    <TaskGroup $grow>
      <TaskIcon $w={93}>{icons.outlook}</TaskIcon>
      <TaskIcon $w={93}>{icons.chrome}</TaskIcon>
      <TaskIcon $w={93}>{icons.excel}</TaskIcon>
      <TaskIcon $w={93}>{icons.ppt}</TaskIcon>
      <TaskIcon $w={93}>{icons.powerBi}</TaskIcon>
      <TaskIcon $w={93}>{icons.vs}</TaskIcon>
      <TaskIcon $w={93}>{icons.ssms}</TaskIcon>
      <TaskIcon $w={93}>{icons.azure}</TaskIcon>
      <TaskIcon $w={93}>{icons.cubes}</TaskIcon>
      <TaskIcon $w={93}>{icons.green}</TaskIcon>
    </TaskGroup>
    <TaskWindow $active><Logo size={40} />Radzen</TaskWindow>
    <TaskWindow>{icons.paint}active2.jpg - Paint</TaskWindow>
    <Tray>
      {icons.people}
      {icons.up}
      <Cloud shades={['#0a5fb5', '#1480d8', '#29a7ec']} />
      <Cloud shades={['#8f8d8d', '#bdbbbb', '#ffffff']} />
      {icons.volume}
      {icons.pen}
      <time>10:54 PM</time>
      {icons.notes}
    </Tray>
  </TaskbarRoot>
);

export default function App() {
  return (
    <AppWindow>
      <GlobalStyle />
      <TitleBar>
        <Logo size={40} />
        Radzen
        <WindowControls>
          <button aria-label="Minimise"><Minimise /></button>
          <button aria-label="Restore"><Restore /></button>
          <button aria-label="Close"><CloseWin /></button>
        </WindowControls>
      </TitleBar>
      <MenuBar>
        {['File', 'Edit', 'Build', 'Deploy', 'Help', 'License', 'Settings'].map(m => <button key={m}>{m}</button>)}
      </MenuBar>
      <Header>
        <Brand href="#"><Logo size={80} /><span><b>rad</b>zen</span></Brand>
        <Crumbs><Gauge /><span>My Applications / Inventory</span></Crumbs>
        <HeaderNav>
          <NavButton><IconBox $w={24}><StopMark /></IconBox>stop</NavButton>
          <NavButton><IconBox $w={40}><Layers /></IconBox>data</NavButton>
          <NavButton><IconBox $w={34}><Padlock /></IconBox>security</NavButton>
          <NavButton><IconBox $w={47}><TfiCloudUp size={46} /></IconBox>deploy</NavButton>
          <NavButton><IconBox $w={42}><MdSettings size={52} /></IconBox>settings</NavButton>
        </HeaderNav>
      </Header>
      <Workspace>
        <Sidebar>
          <SectionList>
            <Section><SectionToggle><Triangle />Toolbox</SectionToggle></Section>
            <Section><SectionToggle><Triangle />Assets</SectionToggle></Section>
            <Section $tall>
              <SectionToggle><Triangle />Layouts</SectionToggle>
              <AddPageButton aria-label="Add layout"><NewPage /></AddPageButton>
            </Section>
            <Section $tall>
              <SectionToggle><Triangle open />Pages</SectionToggle>
              <AddPageButton aria-label="Add page"><NewPage /></AddPageButton>
            </Section>
          </SectionList>
          <PageFilter type="text" aria-label="Filter pages" defaultValue="facil" />
          <PageLink href="#"><Pages />Add Facility</PageLink>
          <PageLink href="#"><Pages />Edit Facility</PageLink>
          <PageLink href="#" $active><Pages />Facility</PageLink>
        </Sidebar>
        <Stage>
          <DeviceBar>
            <DeviceButton aria-label="Phone"><Phone /></DeviceButton>
            <DeviceButton aria-label="Phone landscape"><PhoneWide /></DeviceButton>
            <DeviceButton aria-label="Tablet"><Tablet /></DeviceButton>
            <DeviceButton aria-label="Laptop"><Laptop /></DeviceButton>
            <DeviceButton aria-label="Desktop" $active><Desktop /></DeviceButton>
          </DeviceBar>
          <Viewport>
            <Canvas>
              <DesignPage>
                <PageHeader>
                  <UserBox>
                    <UserInfo>Howdy [Expression]<ImageMark /></UserInfo>
                    <UserToggle aria-label="Profile menu"><ChevronBlue /></UserToggle>
                  </UserBox>
                </PageHeader>
                <TitleRow>
                  <PageTitle>Facility</PageTitle>
                  <ColumnBox>
                    <TagBar><Tag>Column</Tag></TagBar>
                    <StatusPicker>
                      <select aria-label="Status"><option>Status</option></select>
                      <DownMark />
                    </StatusPicker>
                  </ColumnBox>
                </TitleRow>
                <FacilityGrid />
              </DesignPage>
            </Canvas>
            <VTrack />
            <HTrack />
          </Viewport>
          <OutputTab><TfiAngleUp size={27} />Output</OutputTab>
        </Stage>
        <Inspector>
          <SelectionBar>
            <label htmlFor="selection">Selection</label>
            <Field>
              <HashMark $lead><Hash /></HashMark>
              <SelectionSelect id="selection"><option>grid0</option></SelectionSelect>
              <FieldTail><TfiClose size={15} /><TfiAngleDown size={24} /></FieldTail>
            </Field>
          </SelectionBar>
          <TabList role="tablist">
            <Tab role="tab" $active $w={253}><Cog />Properties</Tab>
            <Tab role="tab" $w={182}><MdPalette size={28} />Style</Tab>
            <Tab role="tab" $w={202}><Bolt />Events</Tab>
            <Tab role="tab" $w={234}><Lines />Outline</Tab>
          </TabList>
          <PropertySearch type="text" aria-label="Find property" placeholder="Find property ..." />
          <Divider />
          <PropertyArea>
            <PropertyList>
              {properties.map(p => <PropertyEditor key={p.name} prop={p} />)}
            </PropertyList>
            <PropertyTrack />
          </PropertyArea>
        </Inspector>
      </Workspace>
      <Taskbar />
    </AppWindow>
  );
}
